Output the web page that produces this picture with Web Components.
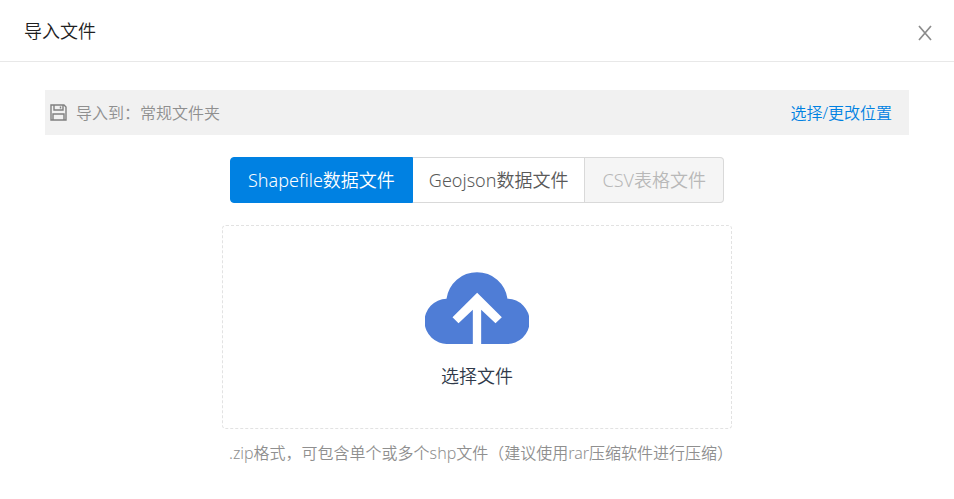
<!DOCTYPE html>
<html lang="zh-CN">
<head>
<meta charset="utf-8">
<meta name="viewport" content="width=device-width, initial-scale=1">
<title>导入文件</title>
<style>
    body {
        margin: 0;
        background-color: #fff;
        color: #1f1f1f;
        font-family: "Noto Sans", "Noto Sans CJK SC", sans-serif;
        font-weight: 350;
        font-size: 16px;
        line-height: 24px;
    }
</style>
</head>
<body>
<import-dialog>
    <span slot="title">导入文件</span>
    <target-bar>常规文件夹<a slot="action" href="#">选择/更改位置</a></target-bar>
    <file-type-tabs></file-type-tabs>
    <upload-box>
        选择文件
        <span slot="hint">.zip格式，可包含单个或多个shp文件（建议使用rar压缩软件进行压缩）</span>
    </upload-box>
</import-dialog>

<script>
// Make a template from a string of markup
function makeTemplate(html){
    const template = document.createElement("template");
    template.innerHTML = html;
    return template;
}

const dialogTemplate = makeTemplate(`
    <style>
    :host {
        display: block;
    }
    header {
        display: flex;
        align-items: center;
        justify-content: space-between;
        height: 61px;
        padding: 0 22px 0 24px;
        border-bottom: 1px solid #e8e8e8;
    }
    h1 {
        margin: 0;
        font-size: 18px;
        font-weight: inherit;
    }
    button {
        display: flex;
        padding: 4px 0 0;
        border: 0;
        background: none;
        cursor: pointer;
    }
    main {
        display: flex;
        flex-direction: column;
        align-items: center;
        gap: 22px;
        padding: 28px 45px 32px;
    }
    </style>
    <header>
        <h1><slot name="title"></slot></h1>
        <button type="button" aria-label="关闭">
            <svg width="14" height="16" viewBox="0 0 14 16" fill="none" stroke="#8c8c8c" stroke-width="1.7"><path d="M1 1L13 15M13 1L1 15"/></svg>
        </button>
    </header>
    <main><slot></slot></main>
`);

// Dialog frame: title, close button and the body
class ImportDialog extends HTMLElement{
    constructor(){
        super();
        this.attachShadow({mode: "open"});
        this.shadowRoot.appendChild(dialogTemplate.content.cloneNode(true));
    }

    connectedCallback(){
        this.shadowRoot.querySelector("button").onclick = () => this.remove();
    }
}

const targetTemplate = makeTemplate(`
    <style>
    :host {
        display: flex;
        align-items: center;
        align-self: stretch;
        min-height: 45px;
        padding: 0 17px 0 5px;
        box-sizing: border-box;
        background-color: #f1f1f1;
        color: #8f8f8f;
    }
    svg {
        margin-right: 9px;
    }
    p {
        flex: 1;
        margin: 0;
    }
    ::slotted(a) {
        color: #0081e2;
        text-decoration: none;
    }
    </style>
    <svg width="17" height="17" viewBox="0 0 17 17" fill="none" stroke="#808080" stroke-width="1.4" aria-hidden="true">
        <path d="M1 1H14L16 3V16H1ZM4 1V6H13V1M3 16V10H14V16"/>
        <path d="M10.500 2.500V4.500"/>
    </svg>
    <p>导入到：<slot></slot></p>
    <slot name="action"></slot>
`);

// Bar with the folder that receives the file
class TargetBar extends HTMLElement{
    constructor(){
        super();
        this.attachShadow({mode: "open"});
        this.shadowRoot.appendChild(targetTemplate.content.cloneNode(true));
    }
}

const tabsTemplate = makeTemplate(`
    <style>
    :host {
        display: block;
    }
    fieldset {
        display: flex;
        margin: 0;
        padding: 0;
        border: 0;
        font-size: 18px;
        color: #595959;
    }
    label {
        position: relative;
        padding: 10px 16px;
        border: 1px solid #d9d9d9;
        border-left-width: 0;
        cursor: pointer;
    }
    label:first-child {
        padding: 10px 17px;
        border-left-width: 1px;
        border-radius: 4px 0 0 4px;
    }
    label:last-child {
        padding: 10px 17px;
        border-radius: 0 4px 4px 0;
    }
    label:has(:checked) {
        background-color: #0081e2;
        border-color: #0081e2;
        color: #fff;
    }
    label:has(:disabled) {
        background-color: #f5f5f5;
        color: #b8b8b8;
        cursor: not-allowed;
    }
    input {
        position: absolute;
        inset: 0;
        margin: 0;
        opacity: 0;
    }
    </style>
    <fieldset aria-label="文件类型">
        <label><input type="radio" name="type" value="shp" checked>Shapefile数据文件</label>
        <label><input type="radio" name="type" value="geojson">Geojson数据文件</label>
        <label><input type="radio" name="type" value="csv" disabled>CSV表格文件</label>
    </fieldset>
`);

// File type switch
class FileTypeTabs extends HTMLElement{
    constructor(){
        super();
        this.attachShadow({mode: "open"});
        this.shadowRoot.appendChild(tabsTemplate.content.cloneNode(true));
    }
}

const uploadTemplate = makeTemplate(`
    <style>
    :host {
        display: block;
        width: 100%;
        max-width: 510px;
    }
    button {
        display: flex;
        flex-direction: column;
        align-items: center;
        gap: 20px;
        width: 100%;
        padding: 46px 16px 40px;
        border: 1px dashed #e2e2e2;
        border-radius: 4px;
        background-color: #fff;
        color: #303a4a;
        font: inherit;
        font-size: 18px;
        cursor: pointer;
    }
    p {
        margin: 12px 0 0;
        padding-left: 7px;
        color: #8f8f8f;
    }
    </style>
    <button type="button">
        <svg width="104" height="72" viewBox="44 36 311 216" fill="#4f7dd6" aria-hidden="true">
            <path d="M112 252A68 68 0 0 1 108 116A92.400 92.400 0 0 1 291 116A68 68 0 0 1 288 252H212V149L255 190L274 172L200 98L126 172L144 190L187 149V252Z"/>
        </svg>
        <span><slot></slot></span>
    </button>
    <input type="file" accept=".zip" aria-label="选择文件" hidden>
    <p><slot name="hint"></slot></p>
`);

// Upload area, opens the file chooser
class UploadBox extends HTMLElement{
    constructor(){
        super();
        this.attachShadow({mode: "open"});
        this.shadowRoot.appendChild(uploadTemplate.content.cloneNode(true));
        this.input = this.shadowRoot.querySelector("input");
    }

    connectedCallback(){
        this.shadowRoot.querySelector("button").onclick = () => this.input.click();
    }
}

customElements.define('import-dialog', ImportDialog);
customElements.define('target-bar', TargetBar);
customElements.define('file-type-tabs', FileTypeTabs);
customElements.define('upload-box', UploadBox);
</script>
</body>
</html>
